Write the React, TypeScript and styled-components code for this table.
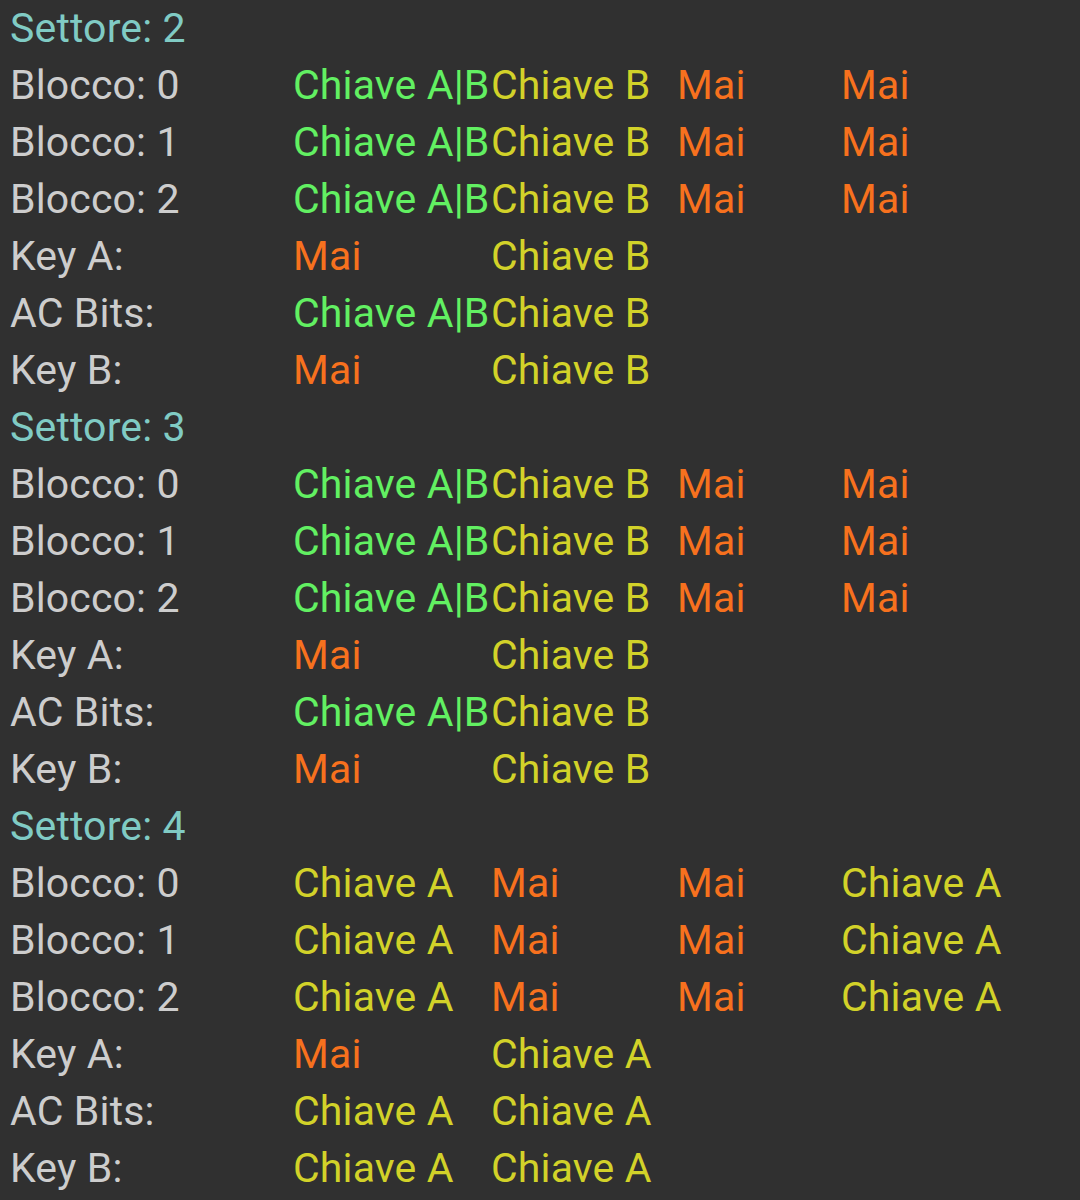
import React from "react";
import styled, { createGlobalStyle } from "styled-components";

const Global = createGlobalStyle`
  html, body { margin: 0; padding: 0; background: #303030; }
  body { font-family: Roboto, "Noto Sans", sans-serif; }
`;

const Page = styled.div`
  background: #303030;
  min-height: 1200px;
  padding: 0 0 0 10px;
  font-size: 41px;
  letter-spacing: 0.15px;
  line-height: 57px;
`;

const SectorTitle = styled.div`
  color: #80cbc4;
  white-space: nowrap;
`;

const Row = styled.div`
  display: grid;
  grid-template-columns: 283px 198px 186px 164px 1fr;
  white-space: nowrap;
`;

type Tone = "label" | "green" | "yellow" | "orange" | "none";

const tones: Record<Tone, string> = {
  label: "#cdcdcd",
  green: "#62f062",
  yellow: "#d2d229",
  orange: "#f7711e",
  none: "transparent",
};

const Cell = styled.span<{ $tone: Tone }>`
  color: ${(p) => tones[p.$tone]};
`;

type Access = "AB" | "A" | "B" | "N" | "";

const text: Record<Access, string> = {
  AB: "Chiave A|B",
  A: "Chiave A",
  B: "Chiave B",
  N: "Mai",
  "": "",
};

const tone = (a: Access): Tone =>
  a === "AB" ? "green" : a === "N" ? "orange" : a === "" ? "none" : "yellow";

type RowData = { label: string; cells: Access[] };

const sectorA: RowData[] = [
  { label: "Blocco: 0", cells: ["AB", "B", "N", "N"] },
  { label: "Blocco: 1", cells: ["AB", "B", "N", "N"] },
  { label: "Blocco: 2", cells: ["AB", "B", "N", "N"] },
  { label: "Key A:", cells: ["N", "B"] },
  { label: "AC Bits:", cells: ["AB", "B"] },
  { label: "Key B:", cells: ["N", "B"] },
];

const sectorB: RowData[] = [
  { label: "Blocco: 0", cells: ["A", "N", "N", "A"] },
  { label: "Blocco: 1", cells: ["A", "N", "N", "A"] },
  { label: "Blocco: 2", cells: ["A", "N", "N", "A"] },
  { label: "Key A:", cells: ["N", "A"] },
  { label: "AC Bits:", cells: ["A", "A"] },
  { label: "Key B:", cells: ["A", "A"] },
];

const sectors: { n: number; rows: RowData[] }[] = [
  { n: 2, rows: sectorA },
  { n: 3, rows: sectorA },
  { n: 4, rows: sectorB },
];

export default function App() {
  return (
    <>
      <Global />
      <Page>
        {sectors.map((s) => (
          <section key={s.n}>
            <SectorTitle>Settore: {s.n}</SectorTitle>
            {s.rows.map((r, i) => (
              <Row key={i}>
                <Cell $tone="label">{r.label}</Cell>
                {r.cells.map((c, j) => (
                  <Cell key={j} $tone={tone(c)}>
                    {text[c]}
                  </Cell>
                ))}
              </Row>
            ))}
          </section>
        ))}
      </Page>
    </>
  );
}
